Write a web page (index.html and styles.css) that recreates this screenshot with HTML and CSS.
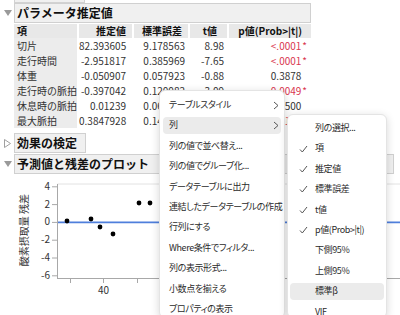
FILE: index.html
```html
<!DOCTYPE html>
<html lang="ja">
<head>
  <meta charset="UTF-8" />
  <title>パラメータ推定値</title>
  <link rel="stylesheet" href="styles.css">
</head>
<body>
  <div class="report">
    <div class="prev-box"></div>

    <div class="outline">
      <span class="tri"><svg width="8" height="6" viewBox="0 0 8 6"><polygon points="0,0 8,0 4,6" fill="#9a9a9a" /></svg></span>
      <div class="outline-title wide">パラメータ推定値</div>
    </div>

    <div class="ptable">
      <div class="th left">項</div>
      <div class="th">推定値</div>
      <div class="th">標準誤差</div>
      <div class="th tcol">t値</div>
      <div class="th pcol">p値(Prob&gt;|t|)</div>

      <div class="td term">切片</div>
      <div class="td est">82.393605</div>
      <div class="td">9.178563</div>
      <div class="td">8.98</div>
      <div class="td pval red">&lt;.0001<span class="star">*</span></div>

      <div class="td term">走行時間</div>
      <div class="td est">-2.951817</div>
      <div class="td">0.385969</div>
      <div class="td">-7.65</div>
      <div class="td pval red">&lt;.0001<span class="star">*</span></div>

      <div class="td term">体重</div>
      <div class="td est">-0.050907</div>
      <div class="td">0.057923</div>
      <div class="td">-0.88</div>
      <div class="td pval">0.3878<span class="star off">*</span></div>

      <div class="td term">走行時の脈拍</div>
      <div class="td est">-0.397042</div>
      <div class="td">0.120082</div>
      <div class="td">-3.09</div>
      <div class="td pval red">0.0049<span class="star">*</span></div>

      <div class="td term">休息時の脈拍</div>
      <div class="td est">0.01239</div>
      <div class="td">0.065958</div>
      <div class="td">0.19</div>
      <div class="td pval">0.8500<span class="star off">*</span></div>

      <div class="td term">最大脈拍</div>
      <div class="td est">0.3847928</div>
      <div class="td">0.141867</div>
      <div class="td">2.71</div>
      <div class="td pval red">0.0121<span class="star">*</span></div>
    </div>

    <div class="outline first-gap">
      <span class="tri"><svg width="7" height="9" viewBox="0 0 7 9"><polygon points="0.5,0.5 6.5,4.5 0.5,8.5" fill="none" stroke="#a0a0a0" /></svg></span>
      <div class="outline-title">効果の検定</div>
    </div>

    <div class="outline">
      <span class="tri"><svg width="8" height="6" viewBox="0 0 8 6"><polygon points="0,0 8,0 4,6" fill="#9a9a9a" /></svg></span>
      <div class="outline-title full">予測値と残差のプロット</div>
    </div>

    <svg class="plot" width="400" height="140" viewBox="0 0 400 140">
      <text class="axis-title" x="25" y="54" transform="rotate(-90 25 54)" text-anchor="middle" dominant-baseline="middle">酸素摂取量 残差</text>
      <line x1="57.5" y1="8" x2="400" y2="8" stroke="#e2e2e2" />
      <line x1="57.5" y1="8" x2="57.5" y2="102" stroke="#a8a8a8" />
      <line x1="57" y1="102.5" x2="400" y2="102.5" stroke="#a8a8a8" />
      <g stroke="#a8a8a8">
        <line x1="52" y1="10.8" x2="57" y2="10.8" />
        <line x1="52" y1="28.6" x2="57" y2="28.6" />
        <line x1="52" y1="46.4" x2="57" y2="46.4" />
        <line x1="52" y1="64.2" x2="57" y2="64.2" />
        <line x1="52" y1="82" x2="57" y2="82" />
        <line x1="52" y1="99.8" x2="57" y2="99.8" />
        <line x1="70.5" y1="102" x2="70.5" y2="107" />
        <line x1="103.5" y1="102" x2="103.5" y2="107" />
        <line x1="137.5" y1="102" x2="137.5" y2="107" />
        <line x1="170.5" y1="102" x2="170.5" y2="107" />
      </g>
      <g class="tick" text-anchor="end" dominant-baseline="middle">
        <text x="50" y="11">4</text>
        <text x="50" y="29">2</text>
        <text x="50" y="46.5">0</text>
        <text x="50" y="64.5">-2</text>
        <text x="50" y="82">-4</text>
        <text x="50" y="100">-6</text>
      </g>
      <text class="tick" x="103.5" y="118" text-anchor="middle">40</text>
      <line x1="58" y1="46.4" x2="400" y2="46.4" stroke="#4f7fdc" stroke-width="1.6" />
      <g fill="#000">
        <circle cx="67" cy="45" r="2.4" />
        <circle cx="91" cy="43" r="2.4" />
        <circle cx="100" cy="51" r="2.4" />
        <circle cx="113" cy="58" r="2.4" />
        <circle cx="139" cy="27" r="2.4" />
        <circle cx="150" cy="27" r="2.4" />
      </g>
    </svg>
  </div>

  <div class="menu main-menu">
    <div class="item">テーブルスタイル<svg class="chev" width="6" height="9" viewBox="0 0 6 9"><polyline points="1,1 5,4.5 1,8" /></svg></div>
    <div class="item active">列<svg class="chev" width="6" height="9" viewBox="0 0 6 9"><polyline points="1,1 5,4.5 1,8" /></svg></div>
    <div class="item">列の値で並べ替え...</div>
    <div class="item">列の値でグループ化...</div>
    <div class="item">データテーブルに出力</div>
    <div class="item">連結したデータテーブルの作成</div>
    <div class="item">行列にする</div>
    <div class="item">Where条件でフィルタ...</div>
    <div class="item">列の表示形式...</div>
    <div class="item">小数点を揃える</div>
    <div class="item">プロパティの表示</div>
  </div>

  <div class="menu sub-menu">
    <div class="item"><span class="check"></span>列の選択...</div>
    <div class="item"><span class="check"><svg width="9" height="8" viewBox="0 0 9 8"><polyline points="1,4.5 3.3,7 8,1" /></svg></span>項</div>
    <div class="item"><span class="check"><svg width="9" height="8" viewBox="0 0 9 8"><polyline points="1,4.5 3.3,7 8,1" /></svg></span>推定値</div>
    <div class="item"><span class="check"><svg width="9" height="8" viewBox="0 0 9 8"><polyline points="1,4.5 3.3,7 8,1" /></svg></span>標準誤差</div>
    <div class="item"><span class="check"><svg width="9" height="8" viewBox="0 0 9 8"><polyline points="1,4.5 3.3,7 8,1" /></svg></span>t値</div>
    <div class="item"><span class="check"><svg width="9" height="8" viewBox="0 0 9 8"><polyline points="1,4.5 3.3,7 8,1" /></svg></span>p値(Prob&gt;|t|)</div>
    <div class="item"><span class="check"></span>下側95%</div>
    <div class="item"><span class="check"></span>上側95%</div>
    <div class="item active"><span class="check"></span>標準β</div>
    <div class="item"><span class="check"></span>VIF</div>
  </div>
</body>
</html>
```

FILE: styles.css
```css
* {
  margin: 0;
  padding: 0;
  box-sizing: border-box;
}
body {
  background-color: #fff;
  font-family: "Noto Sans CJK JP", sans-serif;
  color: #222;
  width: 400px;
  height: 315px;
  overflow: hidden;
  position: relative;
}
.report {
  display: flex;
  flex-direction: column;
}
.prev-box {
  margin-left: 14px;
  width: 71px;
  height: 3px;
  background-color: #f0f0f0;
  border: 1px solid #d2d2d2;
  border-top: none;
}
.outline {
  display: flex;
  align-items: center;
  height: 20px;
}
.outline.first-gap {
  margin-top: 5px;
  margin-bottom: 1px;
}
.tri {
  width: 14px;
  height: 20px;
  display: flex;
  align-items: center;
  padding-left: 4px;
  flex-shrink: 0;
}
.tri svg {
  display: block;
}
.outline-title {
  height: 20px;
  line-height: 18px;
  padding-left: 2px;
  background-color: #f0f0f0;
  border: 1px solid #d0d0d0;
  font-size: 12px;
  font-weight: bold;
  color: #111;
  width: 72px;
}
.outline-title.wide {
  width: 297px;
}
.outline-title.full {
  width: 380px;
}
.ptable {
  display: grid;
  grid-template-columns: 63px 53px 54px 37px 82px;
  column-gap: 2px;
  margin-left: 14px;
  margin-top: 1px;
  font-size: 10px;
}
.th {
  height: 14px;
  line-height: 14px;
  background-color: #e8e8e8;
  font-weight: bold;
  color: #111;
  text-align: right;
  padding-right: 6px;
}
.th.left {
  text-align: left;
  padding-left: 3px;
}
.th.tcol {
  padding-right: 10px;
}
.th.pcol {
  padding-right: 9px;
}
.td {
  height: 15px;
  line-height: 15px;
  text-align: right;
  padding-right: 3px;
  color: #333;
  white-space: nowrap;
}
.td.term {
  text-align: left;
  padding-left: 3px;
  background-color: #ececec;
}
.td.est {
  padding-right: 6px;
}
.td.pval {
  padding-right: 4px;
}
.red {
  color: #d9364f;
}
.star {
  margin-left: 1px;
}
.star.off {
  visibility: hidden;
}
.plot {
  display: block;
  margin-top: 2px;
}
.axis-title {
  font-size: 10px;
  fill: #333;
}
.tick {
  font-size: 10px;
  fill: #333;
}
.menu {
  position: absolute;
  display: flex;
  flex-direction: column;
  gap: 4px;
  background-color: #fff;
  border: 1px solid #e4e4e4;
  border-radius: 6px;
  box-shadow: 0 2px 8px rgba(0, 0, 0, 0.16);
  font-size: 9px;
  letter-spacing: -0.4px;
  color: #2a2a2a;
  font-feature-settings: "palt";
}
.main-menu {
  left: 159px;
  top: 90px;
  width: 126px;
  height: 228px;
  padding: 6px 3px;
}
.sub-menu {
  left: 287px;
  top: 114px;
  width: 100px;
  height: 204px;
  padding: 5px 2px;
}
.item {
  height: 16.4px;
  line-height: 16.4px;
  flex-shrink: 0;
  padding-left: 6px;
  border-radius: 4px;
  display: flex;
  align-items: center;
  white-space: nowrap;
}
.item.active {
  background-color: #ebebeb;
}
.chev {
  margin-left: auto;
  margin-right: 2px;
}
.chev polyline {
  fill: none;
  stroke: #555;
  stroke-width: 1;
}
.sub-menu .item {
  padding-left: 9px;
}
.check {
  width: 16px;
  display: flex;
  align-items: center;
  flex-shrink: 0;
}
.check polyline {
  fill: none;
  stroke: #555;
  stroke-width: 1;
}
```
